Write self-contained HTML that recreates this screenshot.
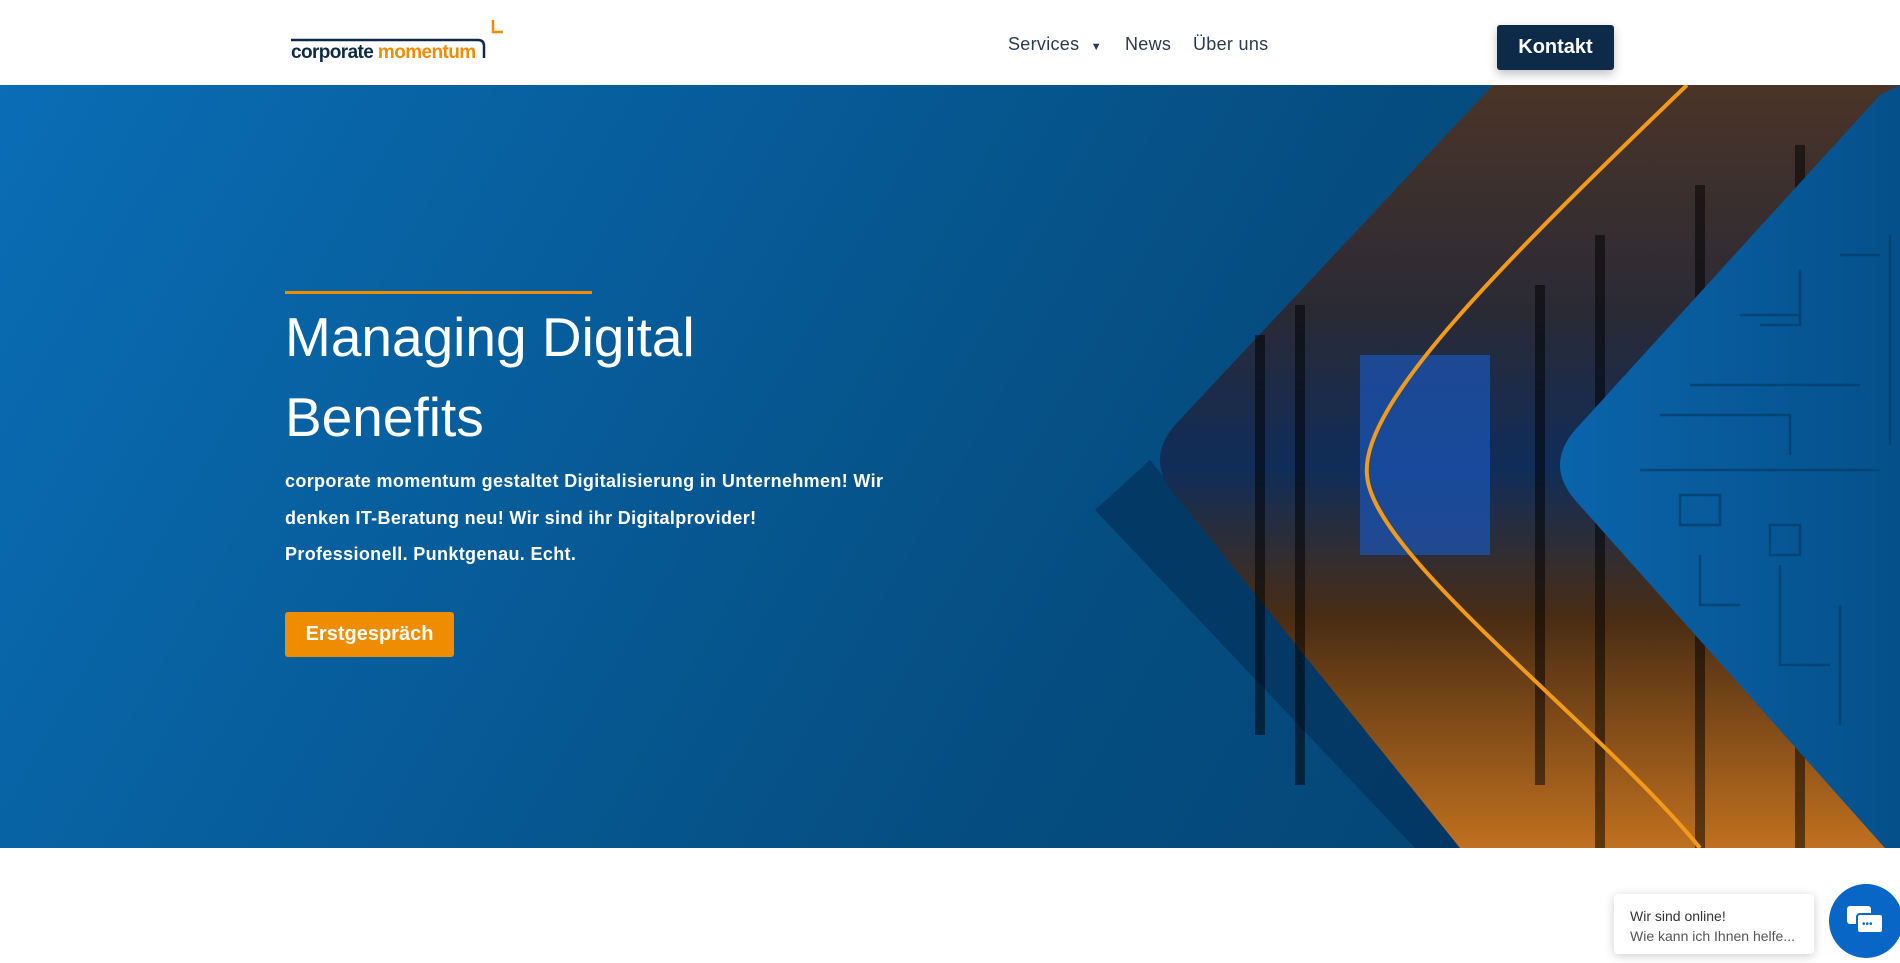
<!DOCTYPE html>
<html><head><meta charset="utf-8"><style>
*{margin:0;padding:0;box-sizing:border-box}
body{width:1900px;height:942px;overflow:hidden;background:#fff;font-family:"Liberation Sans",sans-serif;position:relative}
.hdr{position:absolute;left:0;top:0;width:1900px;height:85px;background:#fff}
.nav{position:absolute;top:34px;font-size:18px;color:#2a3b4f;letter-spacing:.3px}
.kontakt{position:absolute;left:1497px;top:25px;width:117px;height:45px;background:#0d2b48;color:#fff;font-weight:bold;font-size:20px;text-align:center;line-height:45px;border-radius:3px;box-shadow:0 4px 10px rgba(0,0,0,.25)}
.hero{position:absolute;left:0;top:85px;width:1900px;height:763px;overflow:hidden;background:linear-gradient(120deg,#0a6db5 0%,#075d9b 30%,#054d80 60%,#04426f 100%)}
.h1{position:absolute;left:285px;top:212px;color:#fff;font-size:55px;line-height:80px;font-weight:normal}
.p{position:absolute;left:285px;top:378px;color:#fff;font-size:18px;line-height:36.5px;font-weight:bold;width:660px;letter-spacing:.35px}
.btn{position:absolute;left:285px;top:527px;width:169px;height:45px;background:#f08c00;color:#fff;font-weight:bold;font-size:20px;text-align:center;line-height:45px;border-radius:3px}
.chat{position:absolute;left:1614px;top:894px;width:200px;height:60px;background:#fff;border-radius:4px;box-shadow:0 2px 10px rgba(0,0,0,.2);padding:12px 16px;font-size:14px;color:#333;line-height:20px}
.chat .s{color:#555}
.circ{position:absolute;left:1829px;top:884px;width:74px;height:74px;border-radius:50%;background:#0866c6}
</style></head><body>
<div class="hdr">
<svg style="position:absolute;left:288px;top:18px" width="215" height="45">
<path d="M3 22 H190 Q196 22 196 28 V40" stroke="#0d2b48" stroke-width="2.5" fill="none"/>
<path d="M205 2 V14 H208 H222" stroke="#f08c00" stroke-width="2.5" fill="none"/>
<text x="3" y="40" font-family="Liberation Sans" font-size="19" font-weight="bold" letter-spacing="-0.6" fill="#0d2b48">corporate <tspan fill="#f08c00">momentum</tspan></text>
</svg>
<div class="nav" style="left:1008px">Services <span style="font-size:11px;margin-left:6px">▼</span></div>
<div class="nav" style="left:1125px">News</div>
<div class="nav" style="left:1193px">Über uns</div>
<div class="kontakt">Kontakt</div>
</div>
<div class="hero">
<svg style="position:absolute;left:0;top:0" width="1900" height="763">
<defs>
<linearGradient id="ph" x1="0" y1="0" x2="0" y2="1">
<stop offset="0" stop-color="#4a3428"/><stop offset=".3" stop-color="#2a2a35"/><stop offset=".5" stop-color="#0f2d5a"/><stop offset=".7" stop-color="#4a2d14"/><stop offset="1" stop-color="#c0701e"/></linearGradient>
<linearGradient id="bl" x1="0" y1="0" x2="1" y2="0"><stop offset="0" stop-color="#0a64aa"/><stop offset="1" stop-color="#05508a"/></linearGradient>
</defs>
<polygon points="1150,375 1095,425 1415,763 1465,763" fill="#033660" opacity=".85"/>
<path d="M1493 0 L1175 340 Q1145 375 1175 410 L1460 763 L1900 763 L1900 0 Z" fill="url(#ph)"/>
<rect x="1360" y="270" width="130" height="200" fill="#1b56b8" opacity=".7"/>
<g stroke="#000" stroke-width="10" opacity=".5"><line x1="1260" y1="250" x2="1260" y2="650"/><line x1="1300" y1="220" x2="1300" y2="700"/><line x1="1540" y1="200" x2="1540" y2="700"/><line x1="1600" y1="150" x2="1600" y2="763"/><line x1="1700" y1="100" x2="1700" y2="763"/><line x1="1800" y1="60" x2="1800" y2="763"/></g>
<path d="M1687 0 C1500 180 1360 320 1367 390 C1372 470 1600 640 1700 763" stroke="#f29a1a" stroke-width="4" fill="none"/>
<path d="M1880 10 L1575 345 Q1545 380 1575 415 L1900 780 L1900 0 Z" fill="url(#bl)"/>
<g stroke="#03406e" stroke-width="2.5" fill="none" opacity=".8"><path d="M1890 150 V360 M1840 170 H1880 M1800 185 V240 H1760 M1740 230 H1800 M1690 300 H1860 M1660 330 H1790 V370 M1640 385 H1880 M1680 410 H1720 V440 H1680 Z M1770 440 H1800 V470 H1770 Z M1700 470 V520 H1740 M1780 480 V580 H1830 M1840 520 V640"/></g>
</svg>
<div style="position:absolute;left:285px;top:206px;width:307px;height:3px;background:#f08c00"></div>
<div class="h1">Managing Digital<br>Benefits</div>
<div class="p">corporate momentum gestaltet Digitalisierung in Unternehmen! Wir denken IT-Beratung neu! Wir sind ihr Digitalprovider!<br>Professionell. Punktgenau. Echt.</div>
<div class="btn">Erstgespräch</div>
</div>
<div class="chat">Wir sind online!<br><span class="s">Wie kann ich Ihnen helfe...</span></div>
<div class="circ"><svg width="74" height="74"><rect x="18" y="22" width="24" height="18" rx="3" fill="#fff"/><rect x="28" y="30" width="26" height="19" rx="3" fill="#fff" stroke="#0866c6" stroke-width="2"/><text x="33" y="43" fill="#0866c6" font-size="10">•••</text></svg></div>
</body></html>
